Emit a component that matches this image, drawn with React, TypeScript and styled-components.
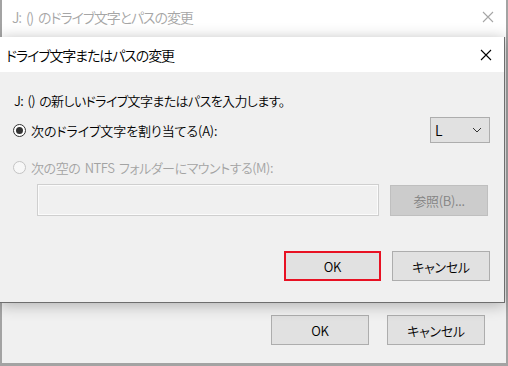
import styled, { createGlobalStyle } from 'styled-components'

const GlobalStyle = createGlobalStyle`
  html, body {
    margin: 0;
    padding: 0;
    background: #a3a3a3;
  }
  body {
    font-family: "Noto Sans CJK JP", "Noto Sans", sans-serif;
    font-feature-settings: "palt";
    font-weight: 350;
  }
  button {
    font-feature-settings: "palt";
  }
`

const Screen = styled.div`
  width: 508px;
  height: 366px;
  overflow: hidden;
  background: #a3a3a3;
  padding-left: 2px;
  box-sizing: border-box;
`

const Window = styled.div`
  position: relative;
  width: 504px;
  height: 363px;
  background: #f0f0f0;
  display: flex;
  flex-direction: column;
`

const TitleBar = styled.div<{ $inactive?: boolean }>`
  height: ${(p) => (p.$inactive ? '37px' : '35px')};
  flex-shrink: 0;
  background: #fff;
  display: flex;
  align-items: center;
  justify-content: space-between;
  padding: ${(p) => (p.$inactive ? '0 12px 3px 10px' : '0 12px 0 6px')};
  box-sizing: border-box;
  color: ${(p) => (p.$inactive ? '#a6a6a6' : '#000')};
  font-size: 14px;
  letter-spacing: -1.1px;
  word-spacing: 3px;
`

const CloseIcon = ({ color }: { color: string }) => (
  <svg width="12" height="12" viewBox="0 0 12 12">
    <path d="M1 1 L11 11 M11 1 L1 11" stroke={color} strokeWidth="1.1" fill="none" />
  </svg>
)

const WindowBody = styled.div`
  flex: 1;
  display: flex;
  align-items: flex-end;
  justify-content: flex-end;
  padding: 0 21px 18px 0;
`

const Footer = styled.div<{ $gap: number }>`
  display: flex;
  justify-content: flex-end;
  gap: ${(p) => p.$gap}px;
`

const Button = styled.button<{ $focused?: boolean; $w?: number; $h?: number }>`
  width: ${(p) => p.$w ?? 98}px;
  height: ${(p) => p.$h ?? 30}px;
  box-sizing: border-box;
  background: #e1e1e1;
  border: ${(p) => (p.$focused ? '2px solid #e81123' : '1px solid #adadad')};
  font-family: inherit;
  font-weight: inherit;
  font-size: 13px;
  letter-spacing: -0.3px;
  color: #000;
  padding: 0;
  cursor: default;

  &:disabled {
    background: #cccccc;
    border-color: #bfbfbf;
    color: #838383;
  }
`

const Dialog = styled.div`
  position: absolute;
  left: -2px;
  top: 37px;
  width: 505px;
  height: 266px;
  box-sizing: border-box;
  background: #f0f0f0;
  border-right: 1px solid #6e6e6e;
  border-bottom: 1px solid #6e6e6e;
  box-shadow: 0 2px 14px rgba(0, 0, 0, 0.28);
  display: flex;
  flex-direction: column;
`

const DialogBody = styled.div`
  display: flex;
  flex-direction: column;
  padding: 0 14px 0 13px;
  font-size: 13px;
`

const Intro = styled.div`
  margin-top: 20px;
  padding-left: 1px;
  line-height: 18px;
  height: 18px;
  letter-spacing: -0.6px;
  word-spacing: 2px;
`

const OptionRow = styled.div<{ $top: number; $h: number }>`
  display: flex;
  align-items: center;
  margin-top: ${(p) => p.$top}px;
  height: ${(p) => p.$h}px;
`

const Radio = styled.span<{ $checked?: boolean; $disabled?: boolean }>`
  width: 13px;
  height: 13px;
  box-sizing: border-box;
  border-radius: 50%;
  border: 1px solid ${(p) => (p.$disabled ? '#c4c4c4' : '#333')};
  background: ${(p) => (p.$disabled ? '#f7f7f7' : '#fff')};
  display: flex;
  align-items: center;
  justify-content: center;
  flex-shrink: 0;

  &::after {
    content: '';
    display: ${(p) => (p.$checked ? 'block' : 'none')};
    width: 7px;
    height: 7px;
    border-radius: 50%;
    background: #333;
  }
`

const Label = styled.span<{ $disabled?: boolean }>`
  margin-left: 5px;
  color: ${(p) => (p.$disabled ? '#a3a3a3' : '#000')};
  letter-spacing: ${(p) => (p.$disabled ? '-0.45px' : '-0.1px')};
  word-spacing: 2px;
`

const Select = styled.div`
  margin-left: auto;
  width: 60px;
  height: 26px;
  box-sizing: border-box;
  border: 1px solid #adadad;
  background: #e1e1e1;
  display: flex;
  align-items: center;
  justify-content: space-between;
  padding: 0 7px 0 4px;
  font-size: 14px;
`

const PathRow = styled.div`
  display: flex;
  align-items: center;
  margin-top: 8px;
  margin-left: 24px;
  gap: 11px;
`

const PathInput = styled.div`
  width: 342px;
  height: 32px;
  box-sizing: border-box;
  border: 1px solid #cfcfcf;
  box-shadow: inset 0 0 0 1px #fbfbfb;
  background: #f0f0f0;
`

const DialogFooter = styled(Footer)`
  margin-top: 35px;
`

export default function App() {
  return (
    <>
      <GlobalStyle />
      <Screen>
        <Window>
          <TitleBar $inactive>
            <span>J: () のドライブ文字とパスの変更</span>
            <CloseIcon color="#a6a6a6" />
          </TitleBar>
          <WindowBody>
            <Footer $gap={18}>
              <Button $h={30}>OK</Button>
              <Button $h={30}>キャンセル</Button>
            </Footer>
          </WindowBody>

          <Dialog>
            <TitleBar>
              <span>ドライブ文字またはパスの変更</span>
              <CloseIcon color="#000" />
            </TitleBar>
            <DialogBody>
              <Intro>J: () の新しいドライブ文字またはパスを入力します。</Intro>
              <OptionRow $top={7} $h={26}>
                <Radio $checked />
                <Label>次のドライブ文字を割り当てる(A):</Label>
                <Select>
                  <span>L</span>
                  <svg width="10" height="6" viewBox="0 0 10 6">
                    <path d="M1 1 L5 5 L9 1" stroke="#333" strokeWidth="1" fill="none" />
                  </svg>
                </Select>
              </OptionRow>
              <OptionRow $top={15} $h={18}>
                <Radio $disabled />
                <Label $disabled>次の空の NTFS フォルダーにマウントする(M):</Label>
              </OptionRow>
              <PathRow>
                <PathInput />
                <Button disabled $h={31}>参照(B)...</Button>
              </PathRow>
              <DialogFooter $gap={11}>
                <Button $focused $w={97}>OK</Button>
                <Button>キャンセル</Button>
              </DialogFooter>
            </DialogBody>
          </Dialog>
        </Window>
      </Screen>
    </>
  )
}
